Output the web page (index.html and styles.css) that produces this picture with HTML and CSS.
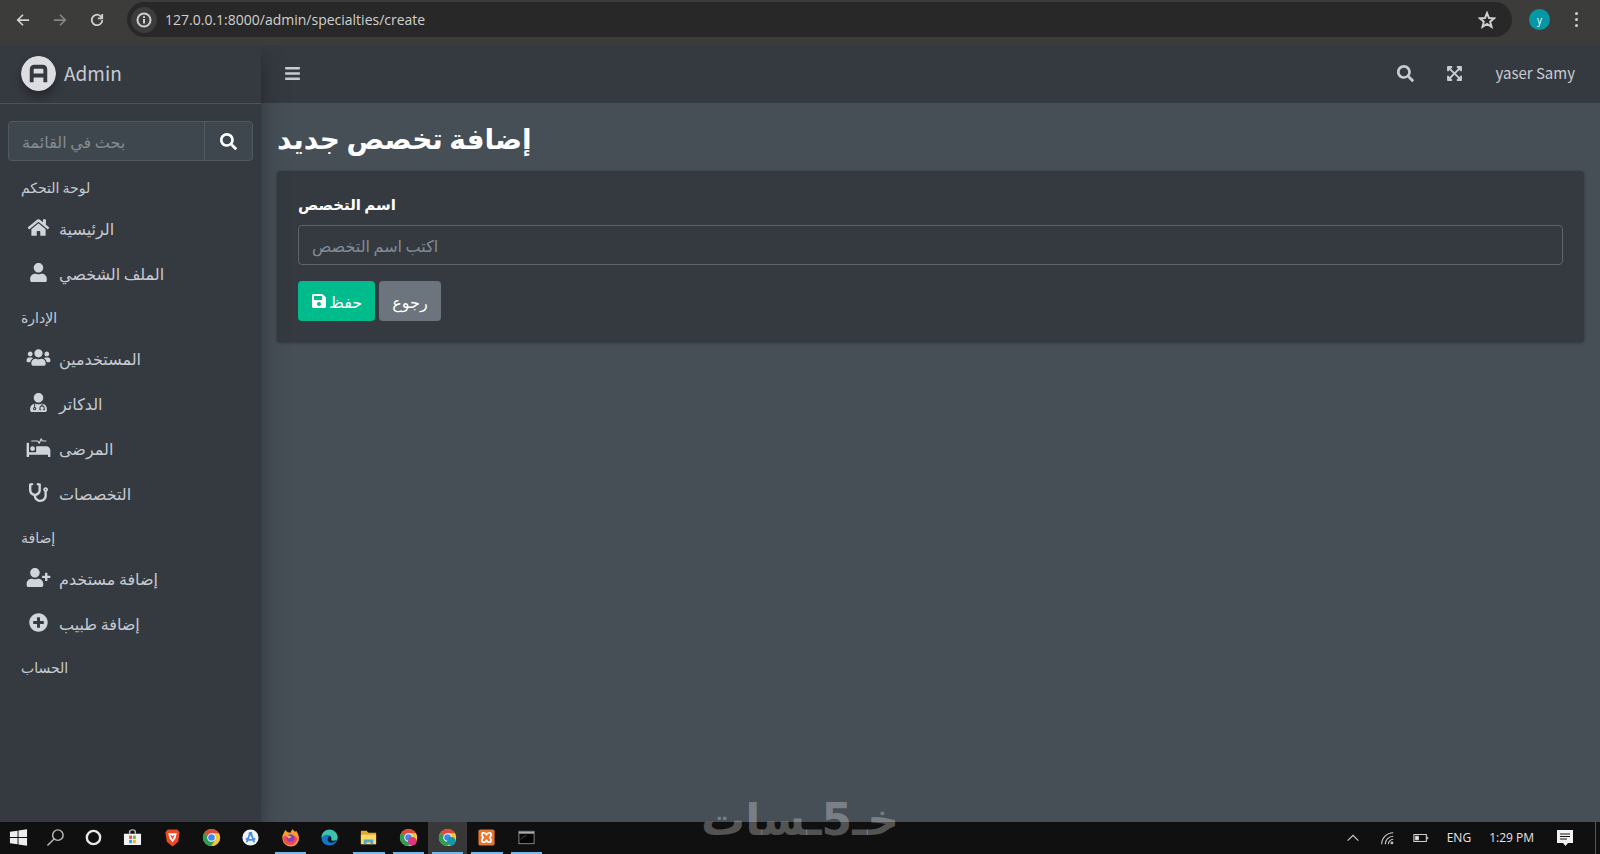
FILE: index.html
```html
<!DOCTYPE html>
<html lang="ar">
<head>
  <meta charset="UTF-8" />
  <meta name="viewport" content="width=device-width, initial-scale=1" />
  <title>إضافة تخصص جديد</title>
  <link rel="stylesheet" href="styles.css">
</head>
<body>
  <!-- Icon set -->
  <svg class="sprite" aria-hidden="true">
    <symbol id="i-search" viewBox="0 0 512 512"><path d="M505 442.7L405.3 343c-4.5-4.5-10.6-7-17-7H372c27.6-35.3 44-79.7 44-128C416 93.1 322.9 0 208 0S0 93.1 0 208s93.1 208 208 208c48.3 0 92.7-16.4 128-44v16.3c0 6.4 2.5 12.5 7 17l99.7 99.7c9.4 9.4 24.6 9.4 33.9 0l28.3-28.3c9.4-9.4 9.4-24.6.1-34zM208 336c-70.7 0-128-57.2-128-128 0-70.7 57.2-128 128-128 70.7 0 128 57.2 128 128 0 70.7-57.2 128-128 128z"/></symbol>
    <symbol id="i-bars" viewBox="0 0 448 512"><path d="M16 132h416c8.8 0 16-7.2 16-16V76c0-8.8-7.2-16-16-16H16C7.2 60 0 67.2 0 76v40c0 8.8 7.2 16 16 16zm0 160h416c8.8 0 16-7.2 16-16v-40c0-8.8-7.2-16-16-16H16c-8.8 0-16 7.2-16 16v40c0 8.8 7.2 16 16 16zm0 160h416c8.8 0 16-7.2 16-16v-40c0-8.8-7.2-16-16-16H16c-8.8 0-16 7.2-16 16v40c0 8.8 7.2 16 16 16z"/></symbol>
    <symbol id="i-expand" viewBox="0 0 448 512"><path d="M448 344v112a23.94 23.94 0 0 1-24 24H312c-21.39 0-32.09-25.9-17-41l36.2-36.2L224 295.6 116.77 402.9 153 439c15.09 15.1 4.39 41-17 41H24a23.94 23.94 0 0 1-24-24V344c0-21.4 25.89-32.1 41-17l36.19 36.2L184.46 256 77.18 148.7 41 185c-15.1 15.1-41 4.4-41-17V56a23.94 23.94 0 0 1 24-24h112c21.39 0 32.09 25.9 17 41l-36.2 36.2L224 216.4l107.23-107.3L295 73c-15.09-15.1-4.39-41 17-41h112a23.94 23.94 0 0 1 24 24v112c0 21.4-25.89 32.1-41 17l-36.19-36.2L263.54 256l107.28 107.3L407 327.1c15.1-15.2 41-4.5 41 16.9z"/></symbol>
    <symbol id="i-home" viewBox="0 0 576 512"><path d="M280.37 148.26L96 300.11V464a16 16 0 0 0 16 16l112.06-.29a16 16 0 0 0 15.92-16V368a16 16 0 0 1 16-16h64a16 16 0 0 1 16 16v95.64a16 16 0 0 0 16 16.05L464 480a16 16 0 0 0 16-16V300L295.67 148.26a12.19 12.19 0 0 0-15.3 0zM571.6 251.47L488 182.56V44.05a12 12 0 0 0-12-12h-56a12 12 0 0 0-12 12v72.61L318.47 43a48 48 0 0 0-61 0L4.34 251.47a12 12 0 0 0-1.6 16.9l25.5 31A12 12 0 0 0 45.15 301l235.22-193.74a12.19 12.19 0 0 1 15.3 0L530.9 301a12 12 0 0 0 16.9-1.6l25.5-31a12 12 0 0 0-1.7-16.93z"/></symbol>
    <symbol id="i-user" viewBox="0 0 448 512"><path d="M224 256c70.7 0 128-57.3 128-128S294.7 0 224 0 96 57.3 96 128s57.3 128 128 128zm89.6 32h-16.7c-22.2 10.2-46.9 16-72.9 16s-50.6-5.8-72.9-16h-16.7C60.2 288 0 348.2 0 422.4V464c0 26.5 21.5 48 48 48h352c26.5 0 48-21.5 48-48v-41.6c0-74.2-60.2-134.4-134.4-134.4z"/></symbol>
    <symbol id="i-users" viewBox="0 0 640 512"><path d="M96 224c35.3 0 64-28.7 64-64s-28.7-64-64-64-64 28.7-64 64 28.7 64 64 64zm448 0c35.3 0 64-28.7 64-64s-28.7-64-64-64-64 28.7-64 64 28.7 64 64 64zm32 32h-64c-17.6 0-33.5 7.1-45.1 18.6 40.3 22.1 68.9 62 75.1 109.4h66c17.7 0 32-14.3 32-32v-32c0-35.3-28.7-64-64-64zm-256 0c61.9 0 112-50.1 112-112S381.9 32 320 32 208 82.1 208 144s50.1 112 112 112zm76.8 32h-8.3c-20.8 10-43.9 16-68.5 16s-47.6-6-68.5-16h-8.3C179.6 288 128 339.6 128 403.2V432c0 26.5 21.5 48 48 48h288c26.5 0 48-21.5 48-48v-28.8c0-63.6-51.6-115.2-115.2-115.2zm-223.7-13.4C161.5 263.1 145.6 256 128 256H64c-35.3 0-64 28.7-64 64v32c0 17.7 14.3 32 32 32h65.9c6.3-47.4 34.9-87.3 75.2-109.4z"/></symbol>
    <symbol id="i-doctor" viewBox="0 0 448 512">
      <path d="M224 256c70.7 0 128-57.3 128-128S294.7 0 224 0 96 57.3 96 128s57.3 128 128 128zm89.6 32h-16.7c-22.2 10.2-46.9 16-72.9 16s-50.6-5.8-72.9-16h-16.7C60.2 288 0 348.2 0 422.4V464c0 26.5 21.5 48 48 48h352c26.5 0 48-21.5 48-48v-41.6c0-74.2-60.2-134.4-134.4-134.4z"/>
      <g fill="none" stroke="#353a41" stroke-width="28" stroke-linecap="round"><path d="M120 300v80"/><circle cx="120" cy="420" r="32"/><path d="M320 300v40c-38 6-58 30-58 66v46h22M320 340c38 6 58 30 58 66v46h-22"/></g>
    </symbol>
    <symbol id="i-bed" viewBox="0 0 640 512"><path d="M528 224H272c-8.8 0-16 7.2-16 16v144H64V144c0-8.8-7.2-16-16-16H16c-8.8 0-16 7.2-16 16v352c0 8.8 7.2 16 16 16h32c8.8 0 16-7.2 16-16v-48h512v48c0 8.8 7.2 16 16 16h32c8.8 0 16-7.2 16-16V336c0-61.9-50.1-112-112-112z"/><circle cx="160" cy="288" r="64"/><path d="M136 80h166l38 60 50-116 36 56h94" fill="none" stroke="currentColor" stroke-width="32" stroke-linecap="round" stroke-linejoin="round"/></symbol>
    <symbol id="i-steth" viewBox="0 0 512 512"><path d="M447.1 112c-34.2.5-62.3 28.4-63 62.6-.5 24.3 12.5 45.6 32 56.8V344c0 57.3-50.2 104-112 104-60 0-109.2-44.1-111.9-99.2C265 333.8 320 269.2 320 192V36.6c0-11.4-8.1-21.3-19.3-23.5L237.8.5c-13-2.6-25.6 5.8-28.2 18.8L206.4 35c-2.6 13 5.8 25.6 18.8 28.2l30.7 6.1v121.4c0 52.9-42.2 96.7-95.1 97.2-53.4.5-96.9-42.7-96.9-96V69.4l30.7-6.1c13-2.6 21.4-15.2 18.8-28.2l-3.1-15.7C107.7 6.4 95.1-2 82.1.6L19.3 13C8.1 15.3 0 25.1 0 36.6V192c0 77.3 55.1 142 128.1 156.8C130.7 439.2 208.6 512 304 512c97 0 176-75.4 176-168V231.4c19.1-11.1 32-31.7 32-55.4 0-35.7-29.2-64.5-64.9-64zm.9 80c-8.8 0-16-7.2-16-16s7.2-16 16-16 16 7.2 16 16-7.2 16-16 16z"/></symbol>
    <symbol id="i-user-plus" viewBox="0 0 640 512"><path d="M624 208h-64v-64c0-8.8-7.2-16-16-16h-32c-8.8 0-16 7.2-16 16v64h-64c-8.8 0-16 7.2-16 16v32c0 8.8 7.2 16 16 16h64v64c0 8.8 7.2 16 16 16h32c8.8 0 16-7.2 16-16v-64h64c8.8 0 16-7.2 16-16v-32c0-8.8-7.2-16-16-16zm-400 48c70.7 0 128-57.3 128-128S294.7 0 224 0 96 57.3 96 128s57.3 128 128 128zm89.6 32h-16.7c-22.2 10.2-46.9 16-72.9 16s-50.6-5.8-72.9-16h-16.7C60.2 288 0 348.2 0 422.4V464c0 26.5 21.5 48 48 48h352c26.5 0 48-21.5 48-48v-41.6c0-74.2-60.2-134.4-134.4-134.4z"/></symbol>
    <symbol id="i-plus" viewBox="0 0 512 512"><path d="M256 8C119 8 8 119 8 256s111 248 248 248 248-111 248-248S393 8 256 8zm144 276c0 6.6-5.4 12-12 12h-92v92c0 6.6-5.4 12-12 12h-56c-6.6 0-12-5.4-12-12v-92h-92c-6.6 0-12-5.4-12-12v-56c0-6.6 5.4-12 12-12h92v-92c0-6.6 5.4-12 12-12h56c6.6 0 12 5.4 12 12v92h92c6.6 0 12 5.4 12 12v56z"/></symbol>
    <symbol id="i-save" viewBox="0 0 448 512"><path d="M433.941 129.941l-83.882-83.882A48 48 0 0 0 316.118 32H48C21.49 32 0 53.49 0 80v352c0 26.51 21.49 48 48 48h352c26.51 0 48-21.49 48-48V163.882a48 48 0 0 0-14.059-33.941zM224 416c-35.346 0-64-28.654-64-64 0-35.346 28.654-64 64-64s64 28.654 64 64c0 35.346-28.654 64-64 64zm96-304.52V212c0 6.627-5.373 12-12 12H76c-6.627 0-12-5.373-12-12V108c0-6.627 5.373-12 12-12h228.52c3.183 0 6.235 1.264 8.485 3.515l3.48 3.48A11.996 11.996 0 0 1 320 111.48z"/></symbol>
    <symbol id="i-chrome" viewBox="0 0 20 20">
      <circle cx="10" cy="10" r="9" fill="#f6c631"/>
      <path d="M10 10L2.2 5.5A9 9 0 0 1 17.8 5.5z" fill="#dd4b3e"/>
      <path d="M2.2 5.5A9 9 0 0 0 10 19l4-7-4-2z" fill="#2f9e52"/>
      <path d="M10 5.5h7.8A9 9 0 0 1 10 19l4-7z" fill="#f6c631"/>
      <circle cx="10" cy="10" r="4.5" fill="#fff"/><circle cx="10" cy="10" r="3.5" fill="#4285f4"/>
    </symbol>
  </svg>

  <!-- Browser toolbar -->
  <header class="browser">
    <button class="browser-btn" aria-label="Back"><svg viewBox="0 0 16 16"><path d="M15 8H2M8 2L2 8l6 6"/></svg></button>
    <button class="browser-btn dim" aria-label="Forward"><svg viewBox="0 0 16 16"><path d="M1 8h13M8 2l6 6-6 6"/></svg></button>
    <button class="browser-btn" aria-label="Reload"><svg viewBox="0 0 16 16"><path d="M14 8a6 6 0 1 1-2-4.500L14 5.500M14 1v5H9"/></svg></button>
    <div class="address">
      <span class="site-info"><svg viewBox="0 0 16 16"><circle cx="8" cy="8" r="6.500"/><path d="M8 7v4.500M8 4.300v1.600"/></svg></span>
      <input class="url" type="text" aria-label="Address" dir="ltr" value="127.0.0.1:8000/admin/specialties/create">
      <button class="star" aria-label="Bookmark"><svg viewBox="0 0 18 18"><path d="M9 2l2 5 5.200.3-4 3.400 1.300 5.100L9 13l-4.500 2.800 1.300-5.100-4-3.400L7 7z"/></svg></button>
    </div>
    <button class="avatar">y</button>
    <button class="dots" aria-label="Menu"><i></i><i></i><i></i></button>
  </header>

  <div class="app">
    <aside class="sidebar">
      <a href="#" class="brand">
        <svg class="brand-logo" viewBox="0 0 36 36"><circle cx="18" cy="18" r="18" fill="#dcdde0"/><path d="M11 27V14q0-3 3-3h8q3 0 3 3v13M11 20h14" fill="none" stroke="#353a41" stroke-width="4"/></svg>
        <span>Admin</span>
      </a>
      <form class="side-search">
        <input type="search" placeholder="بحث في القائمة" aria-label="بحث في القائمة">
        <button type="button" aria-label="بحث"><svg class="icon"><use href="#i-search"/></svg></button>
      </form>
      <nav class="menu">
        <h2>لوحة التحكم</h2>
        <a href="#"><svg class="icon"><use href="#i-home"/></svg><span>الرئيسية</span></a>
        <a href="#"><svg class="icon"><use href="#i-user"/></svg><span>الملف الشخصي</span></a>
        <h2>الإدارة</h2>
        <a href="#"><svg class="icon"><use href="#i-users"/></svg><span>المستخدمين</span></a>
        <a href="#"><svg class="icon"><use href="#i-doctor"/></svg><span>الدكاتر</span></a>
        <a href="#"><svg class="icon"><use href="#i-bed"/></svg><span>المرضى</span></a>
        <a href="#"><svg class="icon"><use href="#i-steth"/></svg><span>التخصصات</span></a>
        <h2>إضافة</h2>
        <a href="#"><svg class="icon"><use href="#i-user-plus"/></svg><span>إضافة مستخدم</span></a>
        <a href="#"><svg class="icon"><use href="#i-plus"/></svg><span>إضافة طبيب</span></a>
        <h2>الحساب</h2>
      </nav>
    </aside>

    <div class="wrapper">
      <nav class="navbar">
        <button aria-label="Toggle menu"><svg class="icon"><use href="#i-bars"/></svg></button>
        <div class="navbar-right">
          <button aria-label="Search"><svg class="icon"><use href="#i-search"/></svg></button>
          <button aria-label="Fullscreen"><svg class="icon"><use href="#i-expand"/></svg></button>
          <a href="#">yaser Samy</a>
        </div>
      </nav>
      <main class="content">
        <h1>إضافة تخصص جديد</h1>
        <form class="card">
          <label for="name">اسم التخصص</label>
          <input id="name" type="text" placeholder="اكتب اسم التخصص">
          <div class="actions">
            <button type="button" class="btn btn-success"><svg class="icon"><use href="#i-save"/></svg><span>حفظ</span></button>
            <a href="#" class="btn btn-secondary">رجوع</a>
          </div>
        </form>
      </main>
    </div>
  </div>

  <!-- Windows taskbar -->
  <footer class="taskbar">
    <button class="task" aria-label="Start"><svg viewBox="0 0 20 20" fill="#eee"><path d="M1 4l8-1.200v6.700H1zM10 2.600l9-1.400v8.300h-9zM1 10.500h8v6.700L1 16zM10 10.500h9v8.300l-9-1.400z"/></svg></button>
    <button class="task" aria-label="Search"><svg viewBox="0 0 20 20" fill="none" stroke="#bbb" stroke-width="1.500"><circle cx="12.500" cy="7.500" r="5.500"/><path d="M8.500 11.500L1.500 18.500"/></svg></button>
    <div class="apps">
      <button class="task" aria-label="Cortana"><svg viewBox="0 0 20 20" fill="none" stroke="#e8e8e8" stroke-width="2.500"><circle cx="10" cy="10" r="7"/></svg></button>
      <button class="task" aria-label="Store"><svg viewBox="0 0 20 20"><path d="M7 6V4q0-2 3-2t3 2v2" fill="none" stroke="#bbb" stroke-width="1.500"/><path d="M1 6h18v11q0 1-1 1H2q-1 0-1-1z" fill="#f2f2f2"/><path d="M6.500 8h3v3.500h-3z" fill="#e0533a"/><path d="M10.500 8h3v3.500h-3z" fill="#7fb13c"/><path d="M6.500 12.500h3V16h-3z" fill="#3a9be0"/><path d="M10.500 12.500h3V16h-3z" fill="#f0b429"/></svg></button>
      <button class="task" aria-label="Brave"><svg viewBox="0 0 20 20"><path d="M5 1.500h10l2.500 3-1.500 10-6 5-6-5-1.500-10z" fill="#ec4a23"/><path d="M5.500 5.500h9L13 11l-3 4-3-4z" fill="#fff"/><path d="M7.500 7l2.500 1.500L12.500 7 10 12z" fill="#ec4a23"/></svg></button>
      <button class="task" aria-label="Chrome"><svg viewBox="0 0 20 20"><use href="#i-chrome"/></svg></button>
      <button class="task" aria-label="Android Studio"><svg viewBox="0 0 20 20"><circle cx="10" cy="10" r="8.500" fill="#f1f3f4"/><path d="M10 4.500L6 15M10 4.500L14 15M5 11q5 3 10 0" fill="none" stroke="#4a8de8" stroke-width="2"/><circle cx="10" cy="6" r="2" fill="#4a8de8"/></svg></button>
      <button class="task open" aria-label="Firefox"><svg viewBox="0 0 20 20"><path d="M3 5l1.500-3L7 4.500q2 0 3 .5 0-2 2.500-4 .5 2 2.500 3l1-1q3 4 3 7.500A8.500 8.500 0 0 1 1.500 11Q1 8 3 5z" fill="#fb9b2c"/><path d="M2 10q3-4 8-2 5-1 7 3-1 7-7.500 7T2 10z" fill="#f0465a"/><circle cx="10" cy="10.500" r="4" fill="#8440c0"/><path d="M5 8q3-1 6 1.500l-3 1.500z" fill="#ffbd3d"/></svg></button>
      <button class="task" aria-label="Edge"><svg viewBox="0 0 20 20"><circle cx="10" cy="10" r="8.500" fill="#1674c9"/><path d="M1.800 8A8.500 8.500 0 0 1 18.500 10q0 3.500-4.500 3.500-3 0-2-2.500 0-4-4.500-4-3.500 0-5.700 3z" fill="#3dc3a8"/><path d="M12 11q-1 2.500 2 2.500 2 0 3.500-1-2 3-5 3-4.500 0-4.500-4 0-2 2-3 2 .5 2 2.500z" fill="#111b28"/></svg></button>
      <button class="task open" aria-label="Files"><svg viewBox="0 0 20 20"><path d="M2 3h6l2 2h8v12H2z" fill="#e3a92c"/><path d="M2 7h16v10H2z" fill="#fbd867"/><path d="M5 17v-5h10v5h-3v-2H8v2z" fill="#55a6c8"/></svg></button>
      <button class="task open" aria-label="Chrome"><svg viewBox="0 0 20 20"><use href="#i-chrome"/><circle cx="14" cy="14" r="4.500" fill="#e0357d"/></svg></button>
      <button class="task open active" aria-label="Chrome"><svg viewBox="0 0 20 20"><use href="#i-chrome"/><circle cx="14" cy="14" r="4.500" fill="#1597a5"/></svg></button>
      <button class="task open" aria-label="XAMPP"><svg viewBox="0 0 20 20"><rect x="1.500" y="1.500" width="17" height="17" rx="2" fill="#e9752e"/><path d="M6 5q4 0 4 3 0-3 4-3 2 2-.5 5 2.500 3 .5 5-4 0-4-3 0 3-4 3-2-2 .5-5Q4 7 6 5z" fill="none" stroke="#fff" stroke-width="1.800"/></svg></button>
      <button class="task open" aria-label="Terminal"><svg viewBox="0 0 20 20"><rect x="2" y="3.500" width="16" height="13" fill="#050505" stroke="#8a8a8a"/><path d="M2 5h16" stroke="#aaa" stroke-width="2"/><path d="M4 12q2-4 6-4" stroke="#444" fill="none"/></svg></button>
    </div>
    <div class="tray">
      <svg viewBox="0 0 18 18"><path d="M3 12l6-6 6 6"/></svg>
      <svg viewBox="0 0 18 18"><path d="M3 16A13 13 0 0 1 16 3M7 16a9 9 0 0 1 9-9M10.500 16a5.500 5.500 0 0 1 5.500-5.500"/><circle cx="14.500" cy="14.500" r="1"/></svg>
      <svg viewBox="0 0 18 18"><path d="M1 5h14v8H1zM16.500 7.500v3"/><path d="M3 7h3v4H3z" fill="#eee"/></svg>
      <span>ENG</span>
      <time>1:29 PM</time>
      <svg class="note" viewBox="0 0 18 18"><path d="M1 1h16v13h-5l-2.500 3L7 14H1z" fill="#f2f2f2" stroke="none"/><path d="M4 5h10M4 7.500h10M4 10h7" stroke="#111"/></svg>
    </div>
  </footer>

  <div class="watermark" dir="rtl">خـ5ـسات</div>
</body>
</html>
```
FILE: styles.css
```css
* {
  box-sizing: border-box;
}

body {
  margin: 0;
  min-height: 100vh;
  display: flex;
  flex-direction: column;
  background: #464e56;
  color: #fff;
  font-family: "Noto Sans CJK SC", "DejaVu Sans", sans-serif;
  font-size: 16px;
  line-height: 24px;
}

button, input {
  font: inherit;
  color: inherit;
}

button {
  padding: 0;
  border: 0;
  background: none;
  cursor: pointer;
}

a {
  color: inherit;
  text-decoration: none;
}

.sprite {
  display: none;
}

.icon {
  width: 16px;
  height: 16px;
  fill: currentColor;
}

/* Browser toolbar */
.browser {
  display: flex;
  align-items: center;
  height: 45px;
  padding: 0 16px 6px;
  background: #3c3c3b;
  color: #d0d0d0;
  font-family: "Open Sans", sans-serif;
  z-index: 3;
}

.browser-btn {
  width: 14px;
  height: 14px;
  margin-right: 23px;
}

.browser-btn.dim {
  color: #858585;
}

.browser svg {
  display: block;
  width: 100%;
  height: 100%;
  fill: none;
  stroke: currentColor;
  stroke-width: 2;
}

.address {
  flex: 1;
  display: flex;
  align-items: center;
  height: 35px;
  margin-right: 17px;
  padding: 0 16px 0 4px;
  border-radius: 18px;
  background: #282828;
}

.site-info {
  width: 26px;
  height: 26px;
  padding: 5px;
  border-radius: 50%;
  background: #3c3c3c;
}

.url {
  flex: 1;
  margin-left: 8px;
  padding: 0;
  border: 0;
  background: none;
  font-size: 14px;
  outline: none;
}

.address .star {
  width: 18px;
  height: 18px;
}

.avatar {
  width: 21px;
  height: 21px;
  border-radius: 50%;
  background: #0697a7;
  color: #fff;
  font-size: 10px;
  line-height: 18px;
}

.dots {
  display: flex;
  flex-direction: column;
  gap: 3px;
  margin: 0 6px 0 25px;
}

.dots i {
  width: 3px;
  height: 3px;
  border-radius: 50%;
  background: #d0d0d0;
}

/* App layout */
.app {
  flex: 1;
  display: flex;
}

.sidebar {
  width: 261px;
  background: #353a41;
  color: #c6cbd1;
  box-shadow: 0 14px 28px rgba(0, 0, 0, 0.2), 0 10px 10px rgba(0, 0, 0, 0.15);
  z-index: 2;
}

.brand {
  display: flex;
  align-items: center;
  gap: 8px;
  height: 59px;
  padding: 0 21px 2px;
  border-bottom: 1px solid #4b545c;
  font-size: 19px;
}

.brand-logo {
  width: 35px;
  height: 35px;
  border-radius: 50%;
  box-shadow: 0 6px 10px rgba(0, 0, 0, 0.3);
}

.side-search {
  display: flex;
  height: 40px;
  margin: 17px 8px 5px;
  border: 1px solid #515961;
  border-radius: 4px;
  background: #3f474e;
}

.side-search input {
  flex: 1;
  min-width: 0;
  padding: 0 13px;
  border: 0;
  background: none;
  outline: none;
}

.side-search button {
  width: 48px;
  border-left: 1px solid #515961;
  color: #fff;
}

.side-search .icon {
  display: block;
  width: 17px;
  height: 17px;
  margin: 0 auto;
}

input::placeholder {
  color: #838b93;
  opacity: 1;
}

.menu {
  padding: 0 8px;
}

.menu h2 {
  margin: 0;
  padding: 9px 13px 7px;
  font-size: 14px;
  font-weight: 400;
  line-height: 24px;
}

.menu a {
  display: flex;
  align-items: center;
  gap: 6px;
  height: 45px;
  padding: 0 16px 2px;
}

.menu .icon {
  width: 29px;
  height: 19px;
  color: #d0d4db;
}

.wrapper {
  flex: 1;
  min-width: 0;
}

.navbar {
  display: flex;
  align-items: center;
  justify-content: space-between;
  height: 58px;
  padding: 0 25px 2px 23px;
  background: #353a41;
  color: #c8cbcf;
  font-size: 15px;
}

.navbar .icon {
  display: block;
  width: 17px;
  height: 17px;
}

.navbar-right {
  display: flex;
  align-items: center;
  gap: 32px;
}

.content {
  padding: 14px 16px;
}

.content h1 {
  margin: 0 0 14px;
  font-size: 28px;
  font-weight: 700;
  line-height: 40px;
}

.card {
  padding: 21px;
  border-radius: 4px;
  background: #353a41;
  box-shadow: 0 0 1px rgba(0, 0, 0, 0.2), 0 1px 3px rgba(0, 0, 0, 0.3);
}

.card label {
  display: block;
  margin-bottom: 9px;
  font-size: 15px;
  font-weight: 700;
}

.card input {
  display: block;
  width: 100%;
  height: 40px;
  margin-bottom: 16px;
  padding: 0 13px;
  border: 1px solid #5d646b;
  border-radius: 4px;
  background: none;
  outline: none;
}

.actions {
  display: flex;
  gap: 4px;
}

.btn {
  display: flex;
  align-items: center;
  gap: 2px;
  height: 40px;
  padding: 0 13px;
  border-radius: 4px;
}

.btn-success {
  background: #00bc8c;
}

.btn-secondary {
  background: #6c757d;
}

/* Taskbar */
.taskbar {
  display: flex;
  align-items: stretch;
  height: 32px;
  background: #101010;
  color: #e4e4e4;
  font-family: "Open Sans", sans-serif;
  font-size: 12px;
  line-height: 16px;
  z-index: 3;
}

.task {
  display: flex;
  align-items: center;
  justify-content: center;
  width: 37px;
  border-bottom: 2px solid transparent;
}

.task svg {
  width: 19px;
  height: 19px;
}

.apps {
  display: flex;
  gap: 8px;
  width: 472px;
  padding: 0 4px;
}

.apps .task {
  flex: 1;
}

.task.open {
  border-bottom-color: #76b9ed;
}

.task.active {
  background: #383838;
  box-shadow: -4px 0 #383838, 4px 0 #383838;
}

.tray {
  display: flex;
  align-items: center;
  gap: 18px;
  margin-left: auto;
  margin-right: 4px;
  padding-right: 21px;
  border-right: 1px solid #555;
}

.tray svg {
  width: 16px;
  height: 16px;
  fill: none;
  stroke: #cfcfcf;
  stroke-width: 1.2;
}

.tray .note {
  width: 18px;
  height: 18px;
  margin-left: 4px;
}

/* Watermark */
.watermark {
  position: absolute;
  left: 50%;
  bottom: 4px;
  transform: translateX(-50%);
  color: rgba(255, 255, 255, 0.28);
  font: 700 44px/60px "DejaVu Sans", sans-serif;
  white-space: nowrap;
  pointer-events: none;
  z-index: 4;
}
```
